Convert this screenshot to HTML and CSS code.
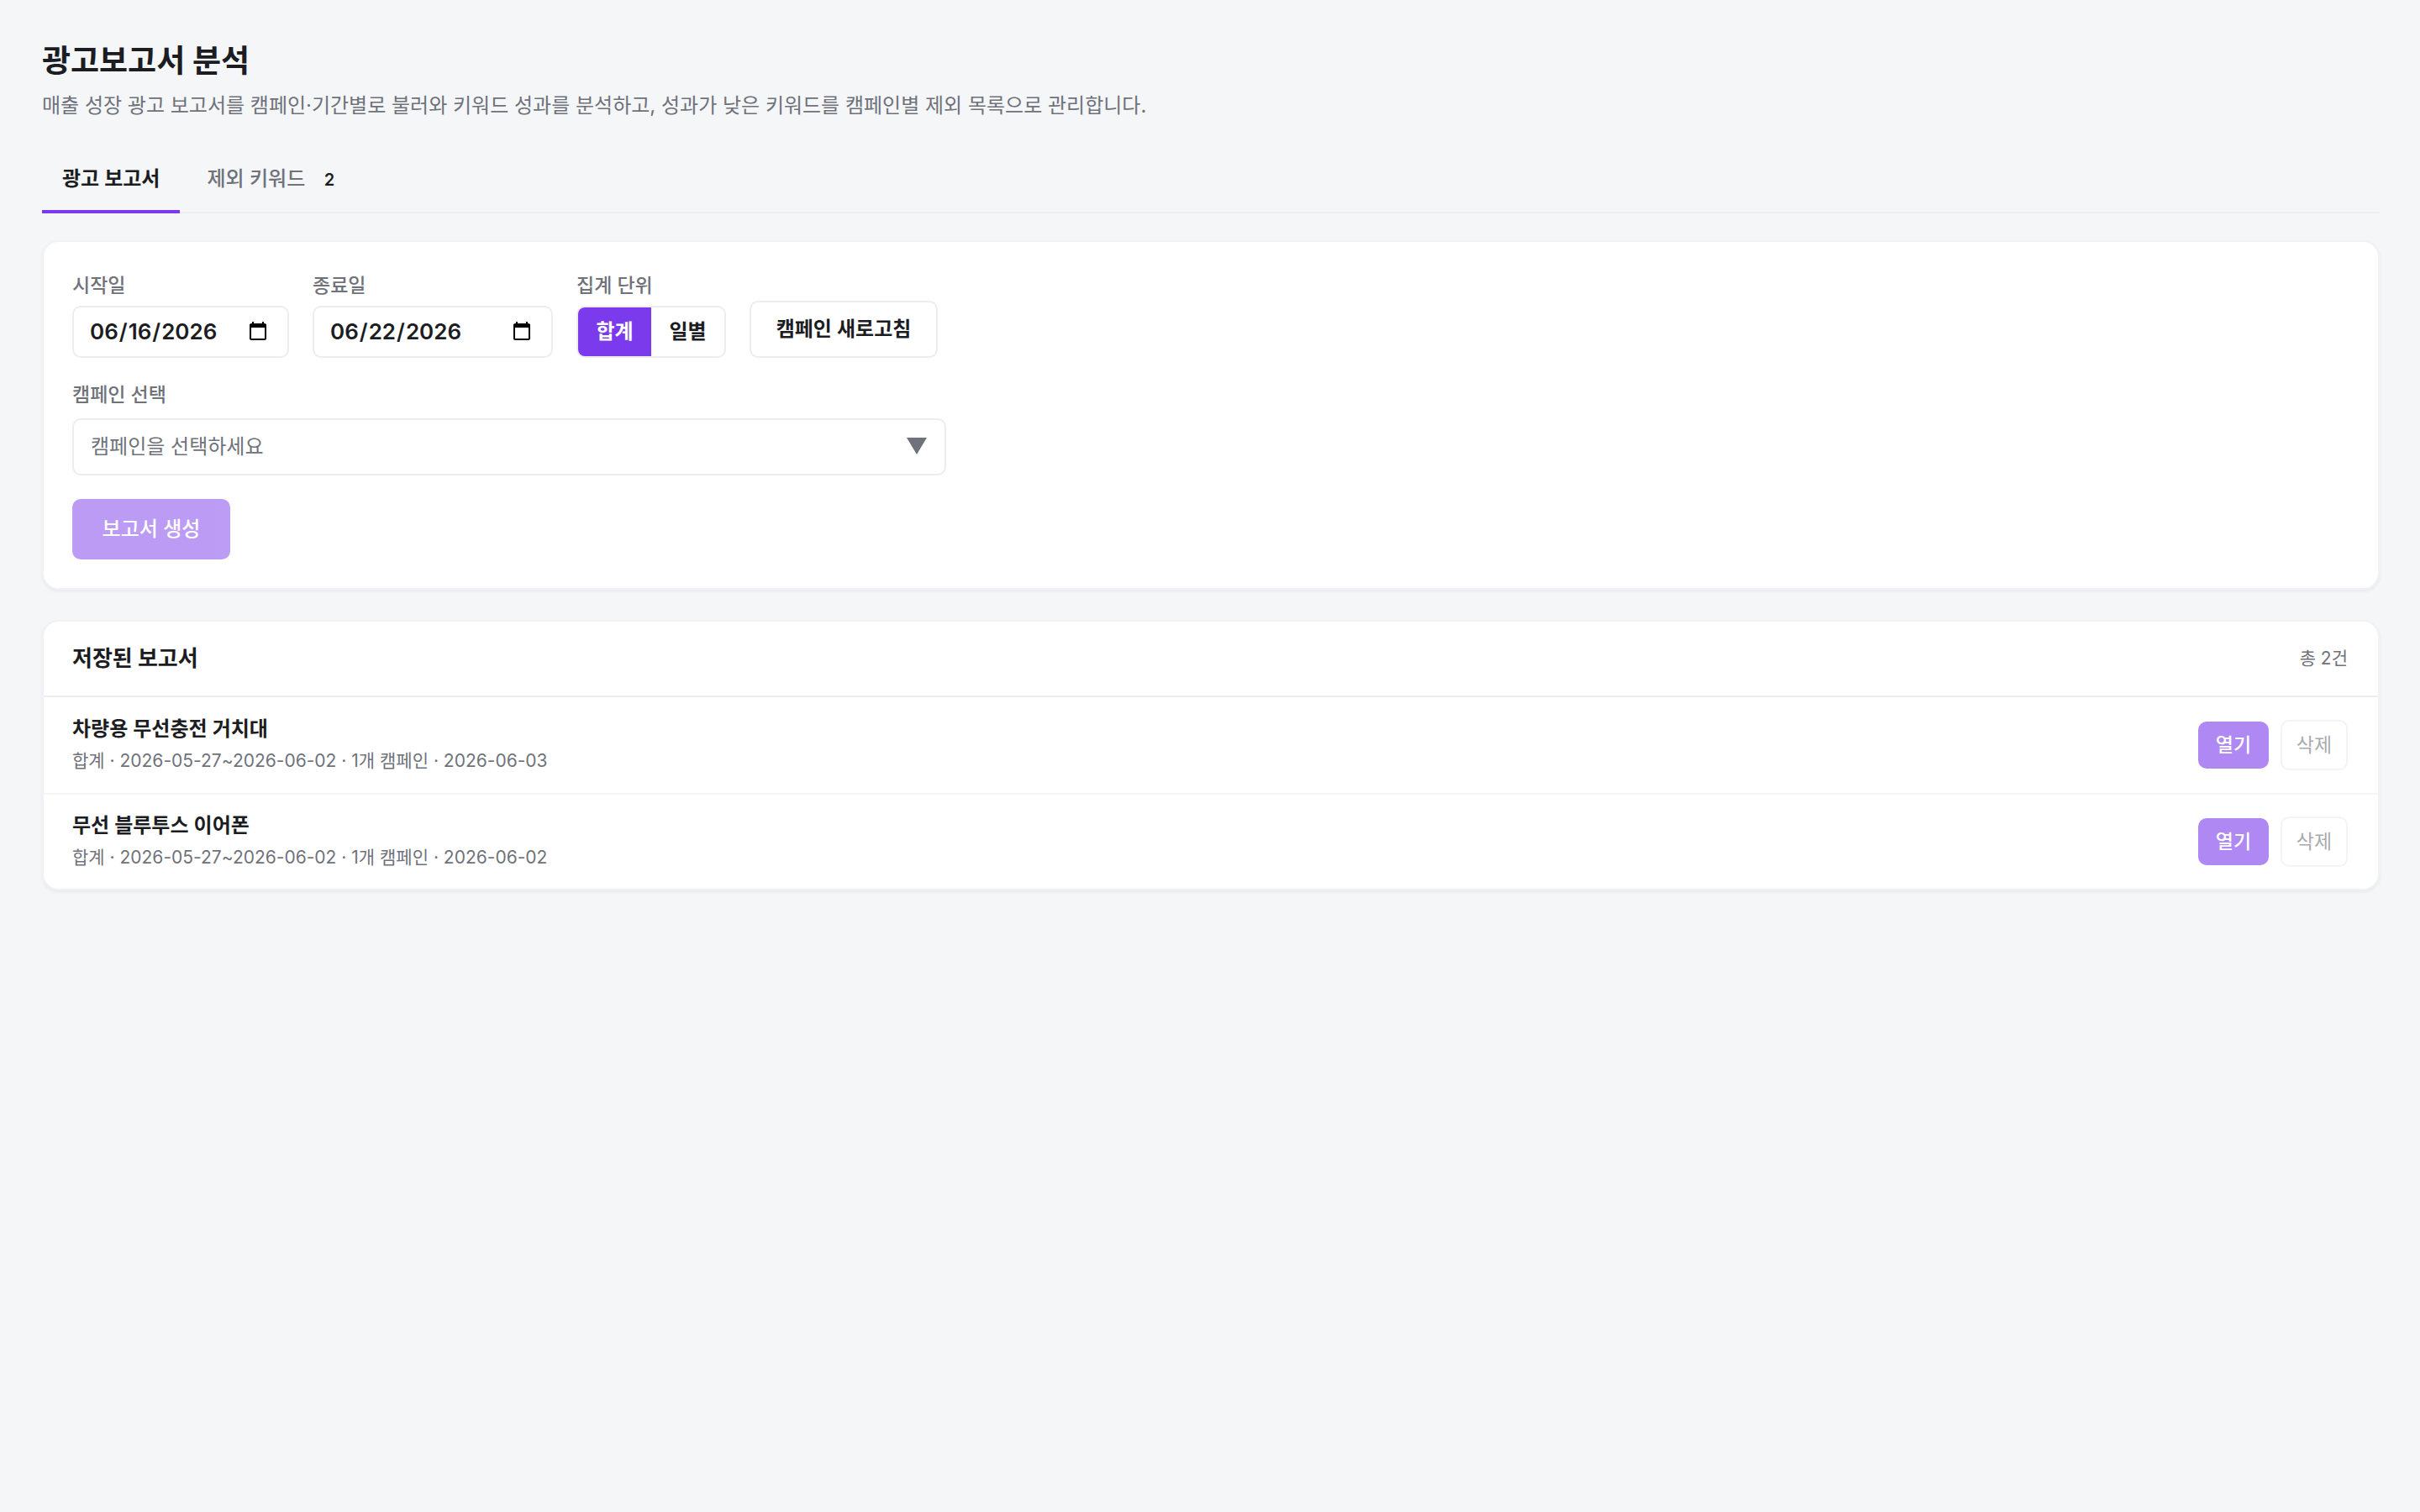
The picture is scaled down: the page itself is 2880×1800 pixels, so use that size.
FILE: index.html
```
<!DOCTYPE html>
<html lang="ko">

<head>
    <meta charset="utf-8">
    <meta name="viewport" content="width=device-width, initial-scale=1.0">
    <title>광고보고서 분석</title>
    <link rel="stylesheet" href="styles.css">
</head>

<body>
    <header>
        <h1>광고보고서 분석</h1>
        <p class="intro">매출 성장 광고 보고서를 캠페인·기간별로 불러와 키워드 성과를 분석하고, 성과가 낮은 키워드를 캠페인별 제외 목록으로 관리합니다.</p>
    </header>

    <nav class="tabs">
        <button type="button" class="tab active">광고 보고서</button>
        <button type="button" class="tab">제외 키워드 <span class="count">2</span></button>
    </nav>

    <main>
        <form class="card filters">
            <div class="filter-row">
                <div class="field">
                    <label for="start">시작일</label>
                    <input type="date" id="start" class="date" value="2026-06-16">
                </div>
                <div class="field">
                    <label for="end">종료일</label>
                    <input type="date" id="end" class="date date-end" value="2026-06-22">
                </div>
                <div class="field">
                    <span class="label" id="unit">집계 단위</span>
                    <div class="segment" role="group" aria-labelledby="unit">
                        <button type="button" class="selected">합계</button>
                        <button type="button">일별</button>
                    </div>
                </div>
                <button type="button" class="refresh">캠페인 새로고침</button>
            </div>

            <div class="field campaign">
                <label for="campaign">캠페인 선택</label>
                <div class="select-wrap">
                    <select id="campaign">
                        <option>캠페인을 선택하세요</option>
                    </select>
                    <svg class="arrow" viewBox="0 0 24 20" aria-hidden="true"><path d="M0 0h24L12 20z" /></svg>
                </div>
            </div>

            <button type="submit" class="create" disabled>보고서 생성</button>
        </form>

        <section class="card">
            <div class="list-head">
                <h2>저장된 보고서</h2>
                <span class="total">총 2건</span>
            </div>
            <ul class="reports">
                <li>
                    <div class="info">
                        <h3>차량용 무선충전 거치대</h3>
                        <p class="meta">합계 · 2026-05-27~2026-06-02 · 1개 캠페인 · 2026-06-03</p>
                    </div>
                    <button type="button" class="open" disabled>열기</button>
                    <button type="button" class="delete" disabled>삭제</button>
                </li>
                <li>
                    <div class="info">
                        <h3>무선 블루투스 이어폰</h3>
                        <p class="meta">합계 · 2026-05-27~2026-06-02 · 1개 캠페인 · 2026-06-02</p>
                    </div>
                    <button type="button" class="open" disabled>열기</button>
                    <button type="button" class="delete" disabled>삭제</button>
                </li>
            </ul>
        </section>
    </main>
</body>

</html>
```
FILE: styles.css
```
* {
    box-sizing: border-box;
}

body {
    margin: 0;
    padding: 48px 48px 48px 50px;
    background-color: #f4f6f8;
    color: #1c1d22;
    font-family: Inter, "Noto Sans CJK KR", sans-serif;
    font-size: 24px;
    line-height: 32px;
}

h1,
h2,
h3,
p,
ul {
    margin: 0;
    padding: 0;
}

button,
input,
select {
    font: inherit;
    color: inherit;
}

button {
    border: none;
    background: none;
    padding: 0;
}

h1 {
    font-size: 37px;
    line-height: 50px;
    font-weight: 700;
}

.intro {
    margin-top: 12px;
    color: #6f727b;
}

/* tabs */
.tabs {
    display: flex;
    margin-top: 46px;
    box-shadow: inset 0 -2px #ecedf0;
}

.tab {
    height: 66px;
    padding: 0 24px 12px;
    border-bottom: 4px solid transparent;
    color: #6f727b;
    font-weight: 500;
}

.tab + .tab {
    margin-left: 8px;
}

.tab.active {
    border-bottom-color: #7c3aed;
    color: #1c1d22;
    font-weight: 600;
}

.count {
    margin-left: 16px;
    color: #1c1d22;
    font-size: 20px;
    font-weight: 600;
}

/* cards */
.card {
    margin-top: 32px;
    border: 2px solid #f1f2f5;
    border-radius: 20px;
    background-color: white;
    box-shadow: 0 2px 4px rgba(20, 20, 50, 0.06);
}

.card + .card {
    margin-top: 36px;
}

.filters {
    padding: 36px 34px 34px;
}

.filter-row {
    display: flex;
    align-items: flex-end;
    gap: 28px;
}

.field label,
.label {
    display: block;
    margin-bottom: 8px;
    color: #6f727b;
    font-size: 23px;
    font-weight: 500;
}

.date,
.segment,
.refresh,
select {
    border: 2px solid #ecedf2;
    border-radius: 10px;
    background-color: white;
}

.date {
    display: block;
    width: 258px;
    height: 62px;
    padding: 0 20px 0 18px;
    font-size: 26px;
    font-weight: 600;
}

.date-end {
    width: 286px;
}

.segment {
    display: flex;
    width: 178px;
    height: 62px;
    overflow: hidden;
}

.segment button {
    flex: 1;
    font-weight: 600;
}

.segment .selected {
    background-color: #7c3aed;
    color: white;
}

.refresh {
    width: 224px;
    height: 68px;
    font-weight: 600;
}

.campaign {
    max-width: 1040px;
    margin-top: 28px;
}

.campaign label {
    margin-bottom: 12px;
}

.select-wrap {
    position: relative;
}

select {
    display: block;
    width: 100%;
    height: 68px;
    padding: 0 60px 0 20px;
    appearance: none;
    color: #6f727b;
}

.arrow {
    position: absolute;
    top: 23px;
    right: 23px;
    width: 24px;
    height: 20px;
    fill: #6f727b;
    pointer-events: none;
}

.create {
    width: 188px;
    height: 72px;
    margin-top: 28px;
    border-radius: 10px;
    background-color: #7c3aed;
    color: white;
    font-weight: 500;
    opacity: 0.5;
}

/* saved reports */
.list-head {
    display: flex;
    align-items: center;
    justify-content: space-between;
    height: 90px;
    padding: 0 36px 0 34px;
    border-bottom: 2px solid #ecedf2;
}

h2 {
    font-size: 26px;
    font-weight: 700;
}

.total,
.meta {
    color: #6f727b;
    font-size: 21px;
}

.reports {
    list-style: none;
}

.reports li {
    display: flex;
    align-items: center;
    gap: 14px;
    height: 114px;
    padding: 0 36px 0 34px;
}

.reports li + li {
    border-top: 2px solid #f4f5f7;
}

.info {
    flex: 1;
}

h3 {
    font-size: 24px;
    font-weight: 600;
}

.meta {
    margin-top: 6px;
}

.open,
.delete {
    border-radius: 10px;
    font-size: 23px;
    opacity: 0.6;
}

.open {
    width: 84px;
    height: 56px;
    background-color: #7c3aed;
    color: white;
    font-weight: 500;
}

.delete {
    width: 80px;
    height: 60px;
    border: 2px solid #ecedf2;
    color: #6f727b;
}
```
